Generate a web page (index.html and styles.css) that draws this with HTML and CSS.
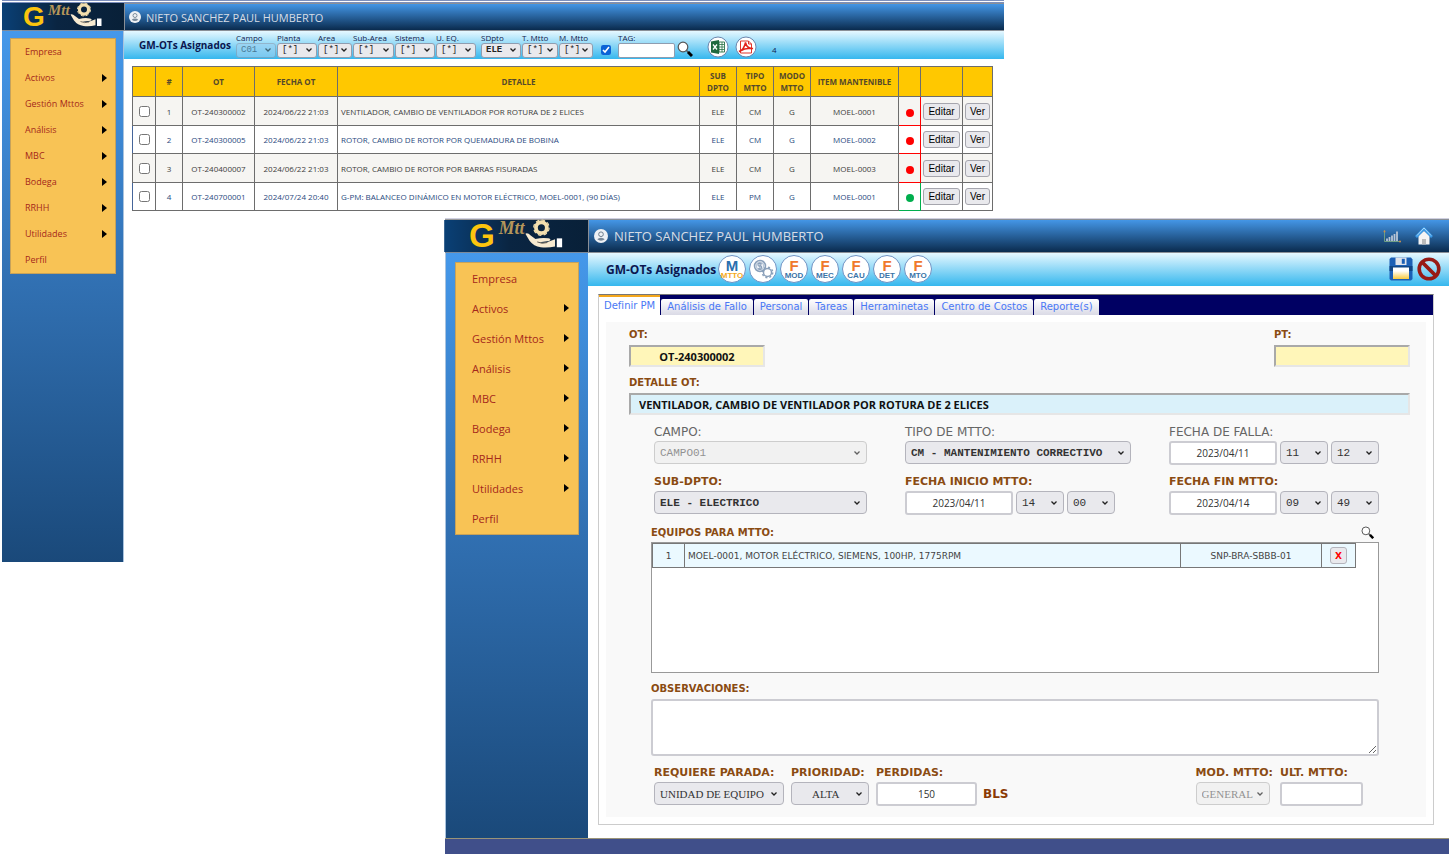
FILE: index.html
```
<!DOCTYPE html>
<html lang="es">
<head>
<meta charset="utf-8">
<title>GM-OTs Asignados</title>
<link rel="stylesheet" href="styles.css">
</head>
<body>
<svg class="sprite" aria-hidden="true">
  <defs>
    <linearGradient id="logo-bg" x1="0" x2="1" y1="0" y2="0"><stop offset="0" stop-color="#0a4076"/><stop offset=".45" stop-color="#0a2542"/><stop offset="1" stop-color="#082038"/></linearGradient>
    <linearGradient id="disk-label" x1="0" x2="0" y1="0" y2="1"><stop offset=".3" stop-color="#fff"/><stop offset="1" stop-color="#f8c93c"/></linearGradient>
  </defs>
  <symbol id="logo" viewBox="0 0 122 27" preserveAspectRatio="xMidYMid slice" overflow="visible">
    <rect width="122" height="27" fill="url(#logo-bg)"/>
    <text x="21" y="23" class="logo-g">G</text>
    <text x="46" y="12" class="logo-m">Mtt</text>
    <circle cx="82" cy="6.500" r="4.600" fill="none" stroke="#f3dfae" stroke-width="3.200"/>
    <circle cx="82" cy="6.500" r="6.500" fill="none" stroke="#f3dfae" stroke-width="1" stroke-dasharray="3 2.100"/>
    <path d="M68.500 11.500q2-1 4.500 1.500l4 3q6-1.500 11-.5 3 1 .5 2.200l-8 1.100q5 1.200 9-1l4-1.500v6q-6 1.500-12 .7-6-.8-9.500-5.500z" fill="#f7ead0"/>
    <path d="M78.500 18.500q4 2 8.500.5" fill="none" stroke="#5b564e" stroke-width=".8"/>
    <path d="M95 15.500h4.500v7.500H95z" fill="#fff"/>
  </symbol>
  <symbol id="user" viewBox="0 0 12 12">
    <circle cx="6" cy="6" r="6" fill="#eef1f5"/>
    <circle cx="6" cy="4.500" r="2" fill="none" stroke="#678" stroke-width=".8"/>
    <path d="M2.800 8.800q1-1.300 3.200-1.300t3.200 1.300q-1.400 1.200-3.200 1.200t-3.200-1.200z" fill="#789"/>
  </symbol>
  <symbol id="lens" viewBox="0 0 16 16">
    <circle cx="6" cy="6" r="4.800" fill="#fff" stroke="#555" stroke-width="1.200"/>
    <path d="M9.500 9.500l2 2" stroke="#555" stroke-width="1.500"/>
    <path d="M11 11l4 4" stroke="#000" stroke-width="3"/>
  </symbol>
</svg>

<section class="window window-list">
  <a class="logo" href="#" aria-label="G Mtto"><svg><use href="#logo"/></svg></a>
  <header class="topbar"><svg class="user-icon"><use href="#user"/></svg><span>NIETO SANCHEZ PAUL HUMBERTO</span></header>
  <aside class="sidebar">
    <nav class="menu">
      <a href="#">Empresa</a><a href="#" class="sub">Activos</a><a href="#" class="sub">Gestión Mttos</a><a href="#" class="sub">Análisis</a><a href="#" class="sub">MBC</a><a href="#" class="sub">Bodega</a><a href="#" class="sub">RRHH</a><a href="#" class="sub">Utilidades</a><a href="#">Perfil</a>
    </nav>
  </aside>
  <main>
    <div class="toolbar">
      <h1>GM-OTs Asignados</h1>
      <div class="filters">
        <label class="f40">Campo<select disabled><option>C01</option></select></label>
        <label class="f40">Planta<select><option>[*]</option></select></label>
        <label class="f34">Area<select><option>[*]</option></select></label>
        <label class="f42">Sub-Area<select><option>[*]</option></select></label>
        <label class="f40">Sistema<select><option>[*]</option></select></label>
        <label class="f40">U. EQ.<select><option>[*]</option></select></label>
        <label class="f40 gap-left">SDpto<select class="strong"><option>ELE</option></select></label>
        <label class="f36">T. Mtto<select><option>[*]</option></select></label>
        <label class="f34">M. Mtto<select><option>[*]</option></select></label>
      </div>
      <input class="toggle" type="checkbox" checked aria-label="Filtrar">
      <label class="filter-tag">TAG:<input type="text"></label>
      <button class="icon-btn lens-btn" aria-label="Buscar"><svg><use href="#lens"/></svg></button>
      <button class="icon-btn round" aria-label="Excel"><svg viewBox="0 0 22 22"><circle cx="11" cy="11" r="10" fill="#fff" stroke="#6d86ad"/><path d="M12 6h5.500v10H12z" fill="#fff" stroke="#287346" stroke-width=".9"/><path d="M12 8.500h5M12 11h5M12 13.500h5M15 6v10" stroke="#287346" stroke-width=".8"/><path d="M4 5.500l8-1.500v14l-8-1.500z" fill="#20693f"/><path d="M6 8.500l4 5M10 8.500l-4 5" stroke="#fff" stroke-width="1.300"/></svg></button>
      <button class="icon-btn round" aria-label="PDF"><svg viewBox="0 0 22 22"><circle cx="11" cy="11" r="10" fill="#fff" stroke="#6d86ad"/><path d="M5.500 5h8l3 3v9h-11zM13.500 5v3h3" fill="#fff" stroke="#e2342a"/><path d="M4 15.500q5-1.500 6.500-9 1.500 6.500 7.500 6-7-1-14 3z" fill="none" stroke="#e2231a" stroke-width="1.500"/></svg></button>
      <output>4</output>
    </div>
    <table class="orders">
      <colgroup><col class="c-check"><col class="c-num"><col class="c-ot"><col class="c-date"><col><col class="c-short"><col class="c-short"><col class="c-short"><col class="c-item"><col class="c-state"><col class="c-edit"><col class="c-view"></colgroup>
      <thead><tr><th></th><th>#</th><th>OT</th><th>FECHA OT</th><th>DETALLE</th><th>SUB DPTO</th><th>TIPO MTTO</th><th>MODO MTTO</th><th>ITEM MANTENIBLE</th><th></th><th></th><th></th></tr></thead>
      <tbody>
        <tr><td><input type="checkbox" aria-label="OT-240300002"></td><td>1</td><td>OT-240300002</td><td>2024/06/22 21:03</td><td class="detail">VENTILADOR, CAMBIO DE VENTILADOR POR ROTURA DE 2 ELICES</td><td>ELE</td><td>CM</td><td>G</td><td>MOEL-0001</td><td class="state late"><i></i></td><td><button>Editar</button></td><td><button>Ver</button></td></tr>
        <tr><td><input type="checkbox" aria-label="OT-240300005"></td><td>2</td><td>OT-240300005</td><td>2024/06/22 21:03</td><td class="detail">ROTOR, CAMBIO DE ROTOR POR QUEMADURA DE BOBINA</td><td>ELE</td><td>CM</td><td>G</td><td>MOEL-0002</td><td class="state late"><i></i></td><td><button>Editar</button></td><td><button>Ver</button></td></tr>
        <tr><td><input type="checkbox" aria-label="OT-240400007"></td><td>3</td><td>OT-240400007</td><td>2024/06/22 21:03</td><td class="detail">ROTOR, CAMBIO DE ROTOR POR BARRAS FISURADAS</td><td>ELE</td><td>CM</td><td>G</td><td>MOEL-0003</td><td class="state late"><i></i></td><td><button>Editar</button></td><td><button>Ver</button></td></tr>
        <tr><td><input type="checkbox" aria-label="OT-240700001"></td><td>4</td><td>OT-240700001</td><td>2024/07/24 20:40</td><td class="detail">G-PM: BALANCEO DINÁMICO EN MOTOR ELÉCTRICO, MOEL-0001, (90 DÍAS)</td><td>ELE</td><td>PM</td><td>G</td><td>MOEL-0001</td><td class="state ok"><i></i></td><td><button>Editar</button></td><td><button>Ver</button></td></tr>
      </tbody>
    </table>
  </main>
</section>

<section class="window window-form">
  <a class="logo" href="#" aria-label="G Mtto"><svg><use href="#logo"/></svg></a>
  <header class="topbar"><svg class="user-icon"><use href="#user"/></svg><span>NIETO SANCHEZ PAUL HUMBERTO</span>
    <a class="stats" href="#" aria-label="Estadísticas"><svg viewBox="0 0 18 13"><path d="M1.500 0v11.500H18" fill="none" stroke="#6f9f86"/><path d="M4 11V8.500M6.500 11V7M9 11V5.500M11.500 11V4M14 11V1.500" stroke="#b9c6d6" stroke-width="1.800"/><circle cx="17" cy="11.500" r="1" fill="#c98d4f"/><circle cx="1.500" cy="1.500" r="1" fill="#c98d4f"/></svg></a>
    <a class="home" href="#" aria-label="Inicio"><svg viewBox="0 0 18 18"><path d="M3.500 9L9 4l5.500 5v8.500h-11z" fill="#f4f4f4"/><path d="M7 12h4v5.500H7z" fill="#bbb"/><path d="M1 10l8-8.500L17 10" fill="none" stroke="#3b9be8" stroke-width="2.600"/><path d="M2 8.500l7-7.500 7 7.500" fill="none" stroke="#c8e8ff" stroke-width=".8"/></svg></a>
  </header>
  <aside class="sidebar">
    <nav class="menu">
      <a href="#">Empresa</a><a href="#" class="sub">Activos</a><a href="#" class="sub">Gestión Mttos</a><a href="#" class="sub">Análisis</a><a href="#" class="sub">MBC</a><a href="#" class="sub">Bodega</a><a href="#" class="sub">RRHH</a><a href="#" class="sub">Utilidades</a><a href="#">Perfil</a>
    </nav>
  </aside>
  <main>
    <div class="toolbar">
      <h1>GM-OTs Asignados</h1>
      <div class="badges">
        <button class="badge maint"><b>M</b><small>MTTO</small></button>
        <button class="badge" aria-label="Costos"><svg viewBox="0 0 26 26" fill="none" stroke="#8aa0ba"><circle cx="10" cy="10" r="5.500" stroke-width="1.500" fill="#eef3f8"/><circle cx="10" cy="10" r="3.800" stroke-width=".6"/><path d="M12 8q-4-1.500-4 .5t2 1.500 1.500 2-3.500.5M10 6.500v7" stroke-width="1.100"/><circle cx="17.500" cy="16.500" r="4" stroke-width="1.500"/><circle cx="17.500" cy="16.500" r="5.200" stroke-width="1.500" stroke-dasharray="2 2.080"/></svg></button>
        <button class="badge"><b>F</b><small>MOD</small></button>
        <button class="badge"><b>F</b><small>MEC</small></button>
        <button class="badge"><b>F</b><small>CAU</small></button>
        <button class="badge"><b>F</b><small>DET</small></button>
        <button class="badge"><b>F</b><small>MTO</small></button>
      </div>
      <div class="actions">
        <button class="icon-btn" aria-label="Guardar"><svg viewBox="0 0 24 24"><path d="M2 .5h20l1.500 2V22L22 23.500H2L.5 22V2z" fill="#1b5fb5"/><path d="M.5 9h23v5H.5z" fill="#104584"/><path d="M6.500.5h11v7.500h-11z" fill="#dfe3ea"/><path d="M12.800 1.800h3v5h-3z" fill="#1b5fb5"/><path d="M4 10.500h16V22H4z" fill="url(#disk-label)"/></svg></button>
        <button class="icon-btn" aria-label="Cancelar"><svg viewBox="0 0 24 24"><circle cx="12" cy="12" r="9.800" fill="none" stroke="#981b16" stroke-width="3.600"/><path d="M5 5l14 14" stroke="#981b16" stroke-width="3.800"/></svg></button>
      </div>
    </div>
    <div class="panel">
      <div class="tabs" role="tablist">
        <button role="tab" aria-selected="true">Definir PM</button><button role="tab">Análisis de Fallo</button><button role="tab">Personal</button><button role="tab">Tareas</button><button role="tab">Herraminetas</button><button role="tab">Centro de Costos</button><button role="tab">Reporte(s)</button>
      </div>
      <form class="form">
        <div class="head-row">
          <label class="field">OT:<input class="key" type="text" value="OT-240300002" readonly></label>
          <label class="field">PT:<input class="key" type="text" readonly></label>
        </div>
        <label class="field detail-field">DETALLE OT:<input class="title-input" type="text" value="VENTILADOR, CAMBIO DE VENTILADOR POR ROTURA DE 2 ELICES" readonly></label>
        <div class="grid">
          <div class="field muted"><label for="campo">CAMPO:</label><select id="campo" class="wide" disabled><option>CAMPO01</option></select></div>
          <div class="field muted"><label for="tipo">TIPO DE MTTO:</label><select id="tipo" class="wider strong"><option>CM - MANTENIMIENTO CORRECTIVO</option></select></div>
          <div class="field muted"><label for="falla">FECHA DE FALLA:</label><div class="when"><input id="falla" type="text" value="2023/04/11"><select aria-label="Hora de falla"><option>11</option></select><select aria-label="Minuto de falla"><option>12</option></select></div></div>
          <div class="field"><label for="sub">SUB-DPTO:</label><select id="sub" class="wide strong"><option>ELE - ELECTRICO</option></select></div>
          <div class="field"><label for="inicio">FECHA INICIO MTTO:</label><div class="when"><input id="inicio" type="text" value="2023/04/11"><select aria-label="Hora de inicio"><option>14</option></select><select aria-label="Minuto de inicio"><option>00</option></select></div></div>
          <div class="field"><label for="fin">FECHA FIN MTTO:</label><div class="when"><input id="fin" type="text" value="2023/04/14"><select aria-label="Hora de fin"><option>09</option></select><select aria-label="Minuto de fin"><option>49</option></select></div></div>
        </div>
        <div class="equip-head"><span class="caption">EQUIPOS PARA MTTO:</span><button type="button" class="icon-btn" aria-label="Buscar equipo"><svg><use href="#lens"/></svg></button></div>
        <div class="equip-box">
          <table class="equip"><tbody><tr><td class="e-num">1</td><td class="e-name">MOEL-0001, MOTOR ELÉCTRICO, SIEMENS, 100HP, 1775RPM</td><td class="e-code">SNP-BRA-SBBB-01</td><td class="e-del"><button type="button">X</button></td></tr></tbody></table>
        </div>
        <div class="field notes"><label for="obs">OBSERVACIONES:</label><textarea id="obs"></textarea></div>
        <div class="bottom-row">
          <div class="field"><label for="parada">REQUIERE PARADA:</label><select id="parada" class="serif s-stop"><option>UNIDAD DE EQUIPO</option></select></div>
          <div class="field"><label for="prio">PRIORIDAD:</label><select id="prio" class="serif s-prio"><option>ALTA</option></select></div>
          <div class="field"><label for="perd">PERDIDAS:</label><div class="unit"><input id="perd" type="text" value="150"><span>BLS</span></div></div>
          <div class="field push"><label for="mod">MOD. MTTO:</label><select id="mod" class="serif s-mod" disabled><option>GENERAL</option></select></div>
          <div class="field"><label for="ult">ULT. MTTO:</label><input id="ult" class="last" type="text"></div>
        </div>
      </form>
    </div>
  </main>
  <footer></footer>
</section>
</body>
</html>
```
FILE: styles.css
```
* { box-sizing: border-box; }
body { margin: 0; min-height: 100vh; position: relative; background: #fff; font-family: "Open Sans", "Noto Sans", sans-serif; }
button, input, select, textarea { font: inherit; margin: 0; }
a { text-decoration: none; color: inherit; }
select { appearance: none; background: url("data:image/svg+xml,%3Csvg xmlns='http://www.w3.org/2000/svg' viewBox='0 0 8 6'%3E%3Cpath d='M1.500 1.500L4 4l2.500-2.500' fill='none' stroke='%23222' stroke-width='1.300'/%3E%3C/svg%3E") right 5px center / 8px 6px no-repeat; }
.sprite { position: absolute; width: 0; height: 0; }
.logo-g { font: bold 28px "Liberation Sans", sans-serif; fill: #fcc40e; }
.logo-m { font: italic bold 15px "Liberation Serif", serif; fill: #b5965a; }

/* Windows */
.window { position: absolute; display: grid; background: #fff; }
.window-list { top: 0; left: 2px; right: 445px; grid-template: 28px 531px / 122px minmax(0, 1fr); border-top: 3px double #7c8fbd; }
.window-form { top: 218px; left: 445px; right: 0; grid-template: 34px auto 16px / 143px minmax(0, 1fr); border-top: 1px solid #cfd0e0; }
.logo { display: block; border-bottom: 1px solid #7d8a99; }
.logo svg { display: block; width: 100%; height: 100%; overflow: visible; }
.window-form .logo { border-top: 1px solid #999; }
.topbar { display: flex; align-items: center; background: linear-gradient(#4496e6, #0a2b4e); border: 1px solid #8a8f96; border-right: 0; color: #d6dde6; }
.window-list .topbar { padding-left: 4px; gap: 5px; font-size: 11px; }
.window-form .topbar { padding: 0 16px 0 5px; gap: 6px; font-size: 13px; }
.user-icon { width: 12px; height: 12px; flex: none; }
.window-form .user-icon { width: 14px; height: 14px; }
.stats { margin-left: auto; width: 18px; height: 13px; }
.home { width: 18px; height: 18px; margin-left: 8px; }
.topbar a svg { display: block; }
.sidebar { background: linear-gradient(#4598ea, #3272b5 45%, #1a497a); }
.window-list .sidebar { padding: 7px 7px 0 8px; border-right: 1px solid #a9c3de; }
.window-form .sidebar { padding: 9px 9px 0; border-left: 1px solid #a9c3de; }
.menu { display: flex; flex-direction: column; background: #f8c355; border: 1px solid #c7a25a; color: #a5281b; }
.menu a { display: flex; align-items: center; justify-content: space-between; }
.window-list .menu { font-size: 9px; }
.window-list .menu a { height: 26px; padding: 0 8px 1px 14px; }
.window-form .menu { font-size: 11px; padding-bottom: 1px; }
.window-form .menu a { height: 30px; padding: 0 9px 0 16px; }
.menu .sub::after { content: ""; border: solid transparent; border-width: 4px 0 4px 5px; border-left-color: #000; }
.toolbar { display: flex; align-items: center; background: linear-gradient(#e6f8ff, #35b7ee); }
.toolbar h1 { margin: 0; color: #0b1650; font-weight: bold; white-space: nowrap; }
.icon-btn { border: 0; padding: 0; background: none; display: block; flex: none; }
.icon-btn svg { display: block; width: 100%; height: 100%; }

/* List toolbar */
.window-list .toolbar { height: 28px; padding-left: 15px; }
.window-list .toolbar h1 { font-size: 10px; width: 97px; }
.filters { display: flex; gap: 1px; }
.filters label, .filter-tag { display: flex; flex-direction: column; font-size: 8px; line-height: 11px; color: #10204c; white-space: nowrap; padding-bottom: 1px; }
.filters select { height: 15px; padding: 0 0 0 4px; border: 1px solid #8f9db0; border-radius: 3px; background-color: #e9e9ed; background-position: right 3px center; color: #222; font: 9px "Liberation Mono", monospace; }
.filters select:disabled { background-color: #9fd2f2; color: #345; opacity: .6; }
.filters .strong { font-weight: bold; }
.f34 { width: 34px; } .f36 { width: 36px; } .f40 { width: 40px; } .f42 { width: 41px; }
.gap-left { margin-left: 4px; }
.toggle { width: 10px; height: 10px; margin: 10px 7px 0 8px; accent-color: #0a63d6; flex: none; }
.filter-tag { width: 57px; }
.filter-tag input { width: 100%; height: 15px; border: 1px solid #8f9db0; border-radius: 2px; background: #fff; }
.lens-btn { width: 16px; height: 16px; margin: 7px 14px 0 2px; }
.round { width: 22px; height: 22px; margin: 4px 6px 0 0; }
.toolbar output { font-size: 8px; color: #10204c; margin: 8px 0 0 9px; }

/* Orders table */
.orders { width: calc(100% - 19px); margin: 7px 0 0 8px; border-collapse: collapse; table-layout: fixed; font-size: 8px; color: #3c3c3c; }
.orders th, .orders td { border: 1px solid #6d6d6d; padding: 0; text-align: center; }
.orders th { height: 30px; background: #ffc800; color: #55492a; line-height: 12px; }
.orders td { height: 29px; }
.orders tbody tr:nth-child(odd) { background: #f6f5f2; }
.orders tbody tr:nth-child(even) { color: #29497e; }
.orders tbody tr:nth-child(even) td { height: 28px; border-left-color: #45659a; }
.orders .detail { text-align: left; padding-left: 3px; white-space: nowrap; }
.orders input { display: block; width: 11px; height: 11px; margin: 0 auto; }
.orders button { height: 17px; padding: 0 4px; border: 1px solid #a5a5ad; border-radius: 3px; background: #e9e9ed; color: #000; font: 10px "Liberation Sans", sans-serif; }
.orders .state i { display: block; width: 8px; height: 8px; margin: 3px auto 0; border-radius: 50%; background: currentColor; }
.orders .late { color: #f00; }
.orders .ok { color: #00ae4d; }
.orders tbody .late, .orders tbody .ok { border-right-color: currentColor; border-bottom-color: currentColor; }
.c-check { width: 23px; } .c-num { width: 27px; } .c-ot { width: 72px; } .c-date { width: 83px; } .c-short { width: 37px; }
.c-item { width: 88px; } .c-state { width: 22px; } .c-edit { width: 42px; } .c-view { width: 30px; }

/* Form toolbar */
.window-form .toolbar { height: 33px; padding: 0 8px 1px 18px; }
.window-form .toolbar h1 { font-size: 12px; width: 112px; }
.badges { display: flex; gap: 3px; }
.badge { width: 28px; height: 28px; padding: 0; border: 1px solid #6f93c4; border-radius: 50%; background: #fff; display: flex; flex-direction: column; align-items: center; justify-content: center; font-family: "Liberation Sans", sans-serif; color: #3a74a8; }
.badge b { font-size: 15px; line-height: 13px; color: #f0792b; }
.badge small { font-size: 8px; line-height: 8px; font-weight: bold; }
.badge.maint b { color: #2a6fae; }
.badge.maint small { color: #f3a91c; }
.badge svg { width: 26px; height: 26px; }
.actions { display: flex; gap: 4px; margin-left: auto; }
.actions .icon-btn { width: 24px; height: 24px; }

/* Panel and tabs */
.panel { margin: 8px 15px 13px 10px; border: 1px solid #ccc; border-top-color: #777; }
.tabs { display: flex; gap: 1px; height: 20px; background: #000063; align-items: flex-end; }
.tabs button { height: 16px; padding: 0 6px; border: 0; border-radius: 2px 2px 0 0; background: linear-gradient(#fff, #dadae6); color: #4a78f5; font: 10px/14px "DejaVu Sans", sans-serif; white-space: nowrap; }
.tabs [aria-selected="true"] { height: 20px; padding: 0 5px; background: #fff; border-top: 2px solid #f5a71c; border-radius: 0; }

/* Form */
.form { margin: 7px; padding: 6px 16px 11px 23px; background: #f9f9f9; }
.field { display: flex; flex-direction: column; align-items: flex-start; color: #8a4b12; font: bold 11px/14px "DejaVu Sans", sans-serif; white-space: nowrap; }
.muted { color: #666; font-weight: normal; font-size: 12px; }
.head-row { display: flex; justify-content: space-between; }
.head-row .field, .detail-field, .notes { font-size: 10px; }
.key, .title-input { height: 22px; margin-top: 3px; border: 2px solid; border-color: #a9a9a9 #e6e6e6 #e6e6e6 #a9a9a9; color: #111; font: bold 11px "Open Sans", sans-serif; }
.key { width: 136px; background: #fff6b9; text-align: center; }
.detail-field { margin-top: 9px; }
.title-input { width: 100%; background: #daf1fa; padding-left: 8px; }
.grid { display: grid; grid-template-columns: 251fr 264fr 210fr; row-gap: 10px; margin: 10px 31px 0 25px; }
.form select { height: 23px; border: 1px solid #b4b4bc; border-radius: 4px; background-color: #e9e9ed; color: #333; font: 11px "Liberation Mono", monospace; padding: 0 4px 0 5px; }
.form select:disabled { background-color: #eee; border-color: #bbb; color: #666; opacity: .7; }
.form .strong { font-weight: bold; }
.grid select, .grid .when { margin-top: 2px; }
.when { display: flex; gap: 3px; }
.grid .when select { width: 48px; margin: 0; }
.when input, .unit input, .last { height: 24px; border: 2px solid #ccccd2; border-radius: 3px; background: #fff; color: #333; text-align: center; font: 10px "Open Sans", sans-serif; }
.when input { width: 108px; }
.wide { width: 213px; }
.wider { width: 226px; }
.equip-head { display: flex; align-items: center; justify-content: space-between; height: 19px; margin: 8px 36px 0 22px; }
.caption { color: #8a4b12; font: bold 10px/14px "DejaVu Sans", sans-serif; }
.equip-head .icon-btn { width: 13px; height: 13px; }
.equip-box { height: 131px; margin: 0 31px 0 22px; border: 1px solid #999; background: #fff; }
.equip { width: calc(100% - 22px); border-collapse: collapse; background: #ebf9ff; color: #444; font: 9px "DejaVu Sans", sans-serif; }
.equip td { height: 24px; padding: 0 3px; border: 1px solid #777; text-align: center; }
.equip .e-name { text-align: left; }
.e-num { width: 32px; } .e-code { width: 141px; } .e-del { width: 34px; }
.equip button { width: 17px; height: 17px; padding: 0; border: 1px solid #b4b4bc; border-radius: 3px; background: #e9e9ed; color: #f00; font: bold 9px "DejaVu Sans", sans-serif; display: block; margin: 0 auto; }
.notes { margin: 9px 31px 0 22px; }
.notes textarea { width: 100%; height: 57px; margin-top: 3px; border: 2px solid #ccccd2; border-radius: 3px; background: #fff; }
.bottom-row { display: flex; gap: 7px; margin: 10px 47px 0 25px; }
.bottom-row select, .unit, .last { margin-top: 2px; }
.push { margin-left: auto; }
.form .serif { font: 11px "Liberation Serif", serif; }
.s-stop { width: 130px; } .s-mod { width: 74px; }
.form .s-prio { width: 78px; padding-left: 20px; }
.unit { display: flex; align-items: center; gap: 6px; }
.unit input { width: 101px; }
.unit span { font-size: 12px; color: #8a3a05; }
.last { width: 83px; }
footer { grid-column: 1 / -1; background: #404f8a; border-top: 1px solid #9a9478; }
```
